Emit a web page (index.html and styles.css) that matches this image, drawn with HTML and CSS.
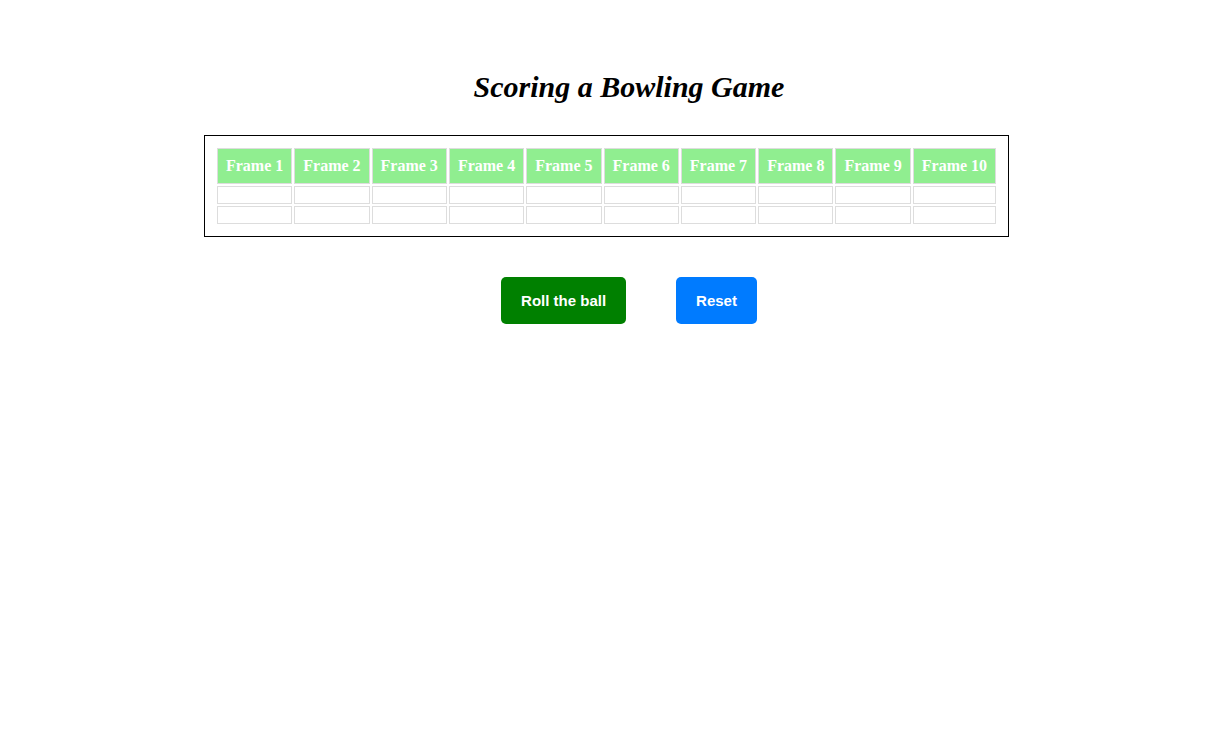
FILE: index.html
```html
<!DOCTYPE html>
<html>
<head>
<meta charset="utf-8">
<title>Bowling</title>
<link rel="stylesheet" href="styles.css">
</head>
<body>
<h1 class="title">Scoring a Bowling Game</h1>
<div class="board-wrap">
  <div class="board">
    <table class="score">
      <thead>
        <tr>
          <th>Frame 1</th><th>Frame 2</th><th>Frame 3</th><th>Frame 4</th><th>Frame 5</th>
          <th>Frame 6</th><th>Frame 7</th><th>Frame 8</th><th>Frame 9</th><th>Frame 10</th>
        </tr>
      </thead>
      <tbody>
        <tr><td></td><td></td><td></td><td></td><td></td><td></td><td></td><td></td><td></td><td></td></tr>
        <tr><td></td><td></td><td></td><td></td><td></td><td></td><td></td><td></td><td></td><td></td></tr>
      </tbody>
    </table>
  </div>
</div>
<div class="actions">
  <button class="btn btn-roll">Roll the ball</button>
  <button class="btn btn-reset">Reset</button>
</div>
</body>
</html>
```
FILE: styles.css
```css
html, body {
  background: #fff;
}
body {
  margin: 8px;
  font-family: "Liberation Serif", serif;
}
.title {
  margin: 60px 0 30px;
  padding-left: 50px;
  text-align: center;
  font-size: 30px;
  font-style: italic;
  font-weight: bold;
  line-height: 37px;
  color: #000;
}
.board-wrap {
  padding-left: 5px;
  display: flex;
  justify-content: center;
}
.board {
  border: 1px solid #000;
  padding: 12px;
}
.score {
  border-collapse: separate;
  border-spacing: 2px;
  margin: -2px;
}
.score th {
  background: #90ee90;
  color: #fff;
  font-weight: bold;
  font-size: 16px;
  padding: 8px;
  border: 1px solid #ddd;
  white-space: nowrap;
}
.score td {
  padding: 8px;
  border: 1px solid #ddd;
}
.actions {
  margin-top: 40px;
  padding-left: 50px;
  display: flex;
  justify-content: center;
  gap: 50px;
}
.btn {
  font-family: "Liberation Sans", Arial, sans-serif;
  font-weight: bold;
  font-size: 15px;
  line-height: 17px;
  padding: 15px 20px;
  border: none;
  border-radius: 5px;
  color: #fff;
  cursor: pointer;
}
.btn-roll { background: #008000; }
.btn-reset { background: #007bff; }
```
